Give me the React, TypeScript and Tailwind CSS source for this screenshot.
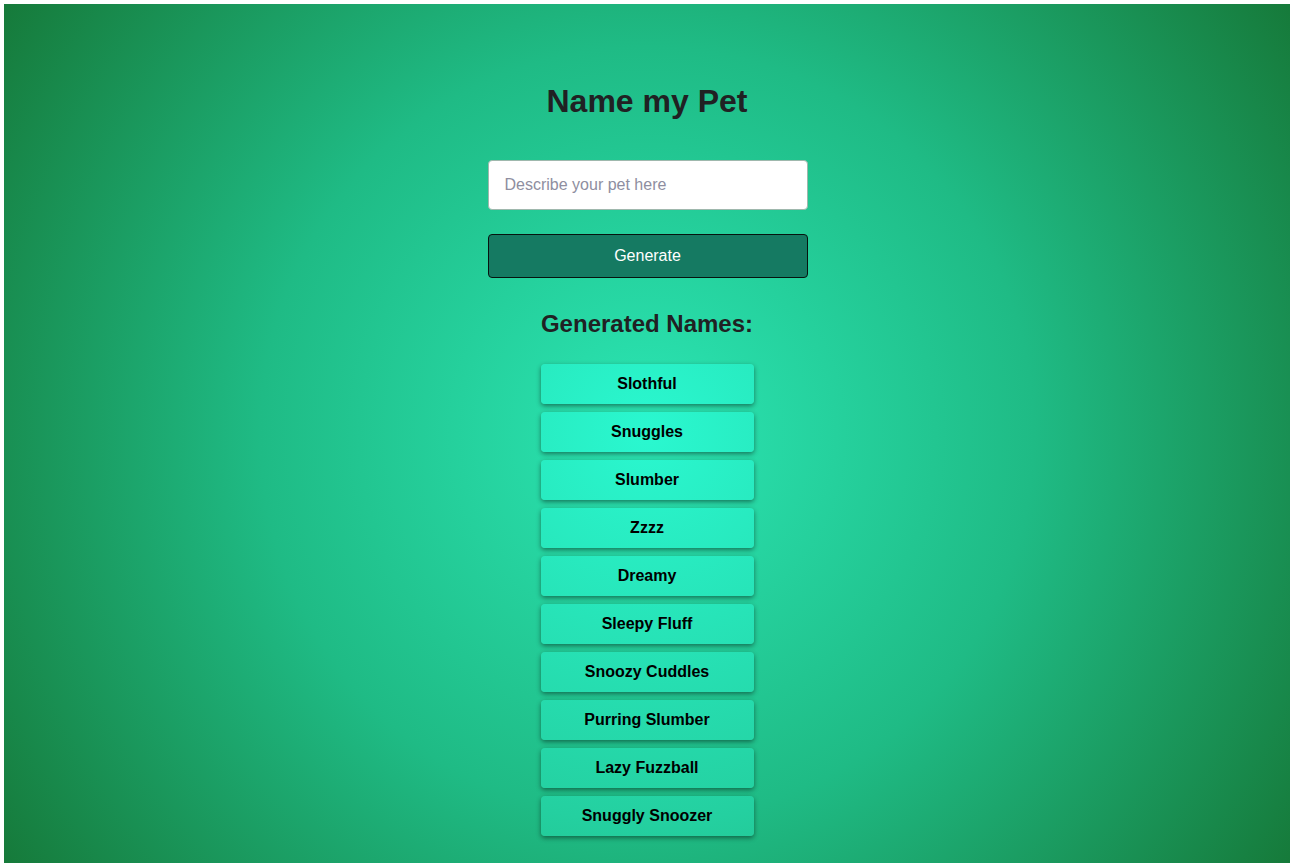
import { useState } from "react";

const NAMES = [
  "Slothful",
  "Snuggles",
  "Slumber",
  "Zzzz",
  "Dreamy",
  "Sleepy Fluff",
  "Snoozy Cuddles",
  "Purring Slumber",
  "Lazy Fuzzball",
  "Snuggly Snoozer",
];

export default function App() {
  const [pet, setPet] = useState("");

  return (
    <div className="bg-white p-1 font-['Liberation_Sans',Arial,sans-serif]">
      <main className="flex h-[859px] flex-col items-center bg-[radial-gradient(circle_at_center,#2be6b4_0%,#1fbb85_50%,#167a3a_100%)] pt-[77px]">
        <h1 className="text-[32px] leading-10 font-bold text-[#202123]">Name my Pet</h1>

        <form
          className="mt-[39px] ml-px flex w-[320px] flex-col gap-6"
          onSubmit={(e) => e.preventDefault()}
        >
          <input
            type="text"
            value={pet}
            onChange={(e) => setPet(e.target.value)}
            placeholder="Describe your pet here"
            className="h-[50px] w-full rounded border border-[#9fb8ad] bg-white px-4 text-base text-[#202123] outline-none placeholder:text-[#8e8ea0]"
          />
          <button
            type="submit"
            className="h-11 w-full rounded border border-[#06140f] bg-[#157a62] text-base text-white"
          >
            Generate
          </button>
        </form>

        <h3 className="mt-8 text-2xl leading-7 font-bold text-[#202123]">Generated Names:</h3>

        <ul className="mt-[26px] flex w-[213px] flex-col gap-2">
          {NAMES.map((name) => (
            <li
              key={name}
              className="flex h-10 items-center justify-center rounded bg-[radial-gradient(circle_at_center,#2af8d0_0%,#24d0a0_50%,#1a9656_100%)] bg-fixed text-base font-bold text-black shadow-[0_2px_5px_rgba(0,0,0,0.45)]"
            >
              {name}
            </li>
          ))}
        </ul>
      </main>
    </div>
  );
}
